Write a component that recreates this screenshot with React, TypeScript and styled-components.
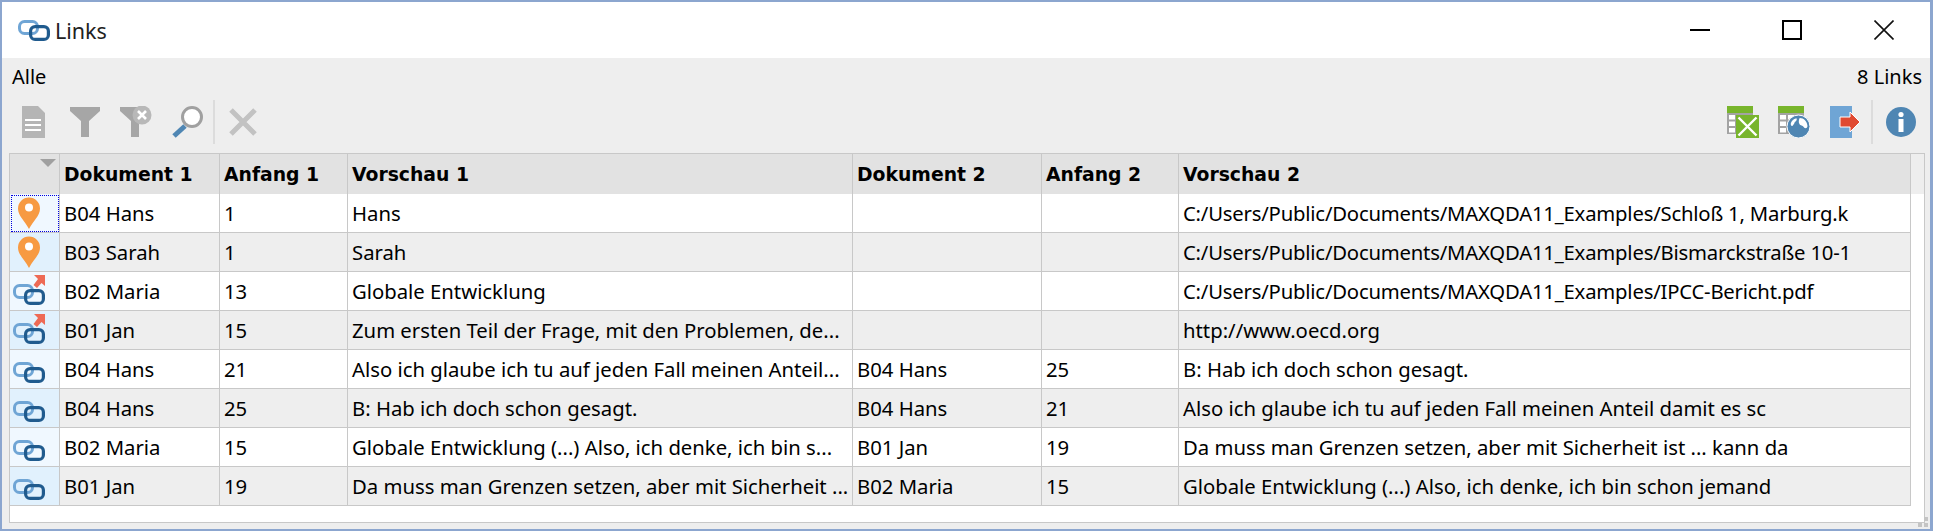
import React from 'react';
import styled, { createGlobalStyle } from 'styled-components';

const GlobalStyle = createGlobalStyle`
  html, body { margin: 0; padding: 0; background: #fff; }
  body { font-family: "Noto Sans", "Open Sans", sans-serif; color: #000; }
`;

const Win = styled.div`
  position: relative;
  box-sizing: border-box;
  width: 1933px;
  height: 531px;
  border: 2px solid #8ca6cf;
  border-right-width: 3px;
  background: #eeeeee;
  display: flex;
  flex-direction: column;
`;

const TitleBar = styled.div`
  height: 56px;
  background: #fff;
  display: flex;
  align-items: center;
  padding-left: 16px;
  flex: none;
`;

const TitleIcon = styled.div`
  display: flex;
  margin-bottom: 6px;
`;

const TitleText = styled.span`
  margin-left: 5px;
  font-size: 21.5px;
  color: #222;
  flex: 1;
`;

const WinButtons = styled.div`
  display: flex;
  height: 100%;
`;

const WinButton = styled.div`
  width: 92px;
  display: flex;
  align-items: center;
  justify-content: center;
`;

const InfoRow = styled.div`
  height: 37px;
  flex: none;
  display: flex;
  align-items: center;
  justify-content: space-between;
  padding: 0 8px 0 10px;
  font-size: 20px;
`;

const Toolbar = styled.div`
  height: 54px;
  flex: none;
  display: flex;
  align-items: center;
  padding: 0 4px 0 6px;
`;

const ToolGroup = styled.div`
  display: flex;
  align-items: center;
  height: 100%;
`;

const ToolButton = styled.div`
  width: 51px;
  height: 100%;
  display: flex;
  align-items: center;
  justify-content: center;
`;

const Separator = styled.div`
  width: 2px;
  height: 44px;
  margin: 0 2px 0 1px;
  background: #dcdcdc;
`;

const Spacer = styled.div`
  flex: 1;
`;

const TableFrame = styled.div`
  margin: 4px 5px 0 7px;
  height: 370px;
  box-sizing: border-box;
  border: 1px solid #c8c8c8;
  background: #fff;
  flex: none;
`;

const columns = '50px 160px 128px 505px 189px 137px 732px 1fr';

const HeaderRow = styled.div`
  display: grid;
  grid-template-columns: ${columns};
  height: 40px;
  background: #e2e2e2;
`;

const HeaderCell = styled.div<{ $filler?: boolean }>`
  position: relative;
  box-sizing: border-box;
  border-right: 1px solid #c8c8c8;
  padding-left: 4px;
  display: flex;
  align-items: center;
  font-family: "DejaVu Sans", sans-serif;
  font-weight: 700;
  font-size: 18.8px;
  white-space: nowrap;
  ${(p) => (p.$filler ? 'background: #eeeeee; border-right: none;' : '')}
`;

const SortArrow = styled.div`
  position: absolute;
  top: 5px;
  right: 3px;
  width: 0;
  height: 0;
  border-left: 8px solid transparent;
  border-right: 8px solid transparent;
  border-top: 8px solid #a0a0a0;
`;

const Row = styled.div<{ $alt: boolean }>`
  display: grid;
  grid-template-columns: ${columns};
  height: 39px;
  background: ${(p) => (p.$alt ? '#eeeeee' : '#fff')};
`;

const Cell = styled.div<{ $path?: boolean }>`
  box-sizing: border-box;
  border-right: 1px solid #c8c8c8;
  border-bottom: 1px solid #c8c8c8;
  padding-left: 4px;
  display: flex;
  align-items: center;
  font-size: 20.3px;
  white-space: nowrap;
  overflow: hidden;
  ${(p) => (p.$path ? 'letter-spacing: -0.2px;' : '')}
`;

const IconCell = styled.div<{ $alt: boolean; $focus?: boolean; $inset: number }>`
  box-sizing: border-box;
  border-right: 1px solid #c8c8c8;
  border-bottom: 1px solid #c8c8c8;
  background: ${(p) => (p.$alt ? '#e1f1fd' : '#f0f8ff')};
  display: flex;
  align-items: center;
  padding-left: ${(p) => p.$inset}px;
  ${(p) => (p.$focus ? 'outline: 1px dotted #0000e0; outline-offset: -2px;' : '')}
`;

const Filler = styled.div`
  background: #fff;
`;

const Grip = styled.svg`
  position: absolute;
  right: 2px;
  bottom: 2px;
`;

const LinkIcon = ({ out }: { out?: boolean }) => (
  <svg width="32" height="32" viewBox="0 0 32 32">
    <rect x="1.5" y="10.5" width="18" height="12" rx="5" fill="none" stroke="#6fa5d5" strokeWidth="3" />
    <rect x="12.6" y="15.6" width="17.8" height="12.8" rx="4.5" fill="none" stroke="#205b8e" strokeWidth="3.2" />
    {out && <path d="M21 0 H32 V11 L28.5 8 L24 13 L20.5 10 L25 4 Z" fill="#ee6a55" />}
  </svg>
);

const PinIcon = () => (
  <svg width="24" height="32" viewBox="0 0 24 32">
    <path d="M12 32 C8 24 1 19 1 11.5 A11 11 0 0 1 23 11.5 C23 19 16 24 12 32 Z" fill="#f79a42" />
    <circle cx="12" cy="10.5" r="4" fill="#fff" />
  </svg>
);

const TableGlyph = () => (
  <g>
    <rect x="0" y="0" width="26" height="28" fill="#a3a3a3" />
    <rect x="0" y="0" width="26" height="7" fill="#78b52c" />
    <rect x="2" y="9" width="6" height="4.5" fill="#fff" />
    <rect x="10" y="9" width="6" height="4.5" fill="#fff" />
    <rect x="18" y="9" width="6" height="4.5" fill="#fff" />
    <rect x="2" y="15.5" width="6" height="4.5" fill="#fff" />
    <rect x="10" y="15.5" width="6" height="4.5" fill="#fff" />
    <rect x="2" y="22" width="6" height="4.5" fill="#fff" />
  </g>
);

const DocIcon = () => (
  <svg width="32" height="32" viewBox="0 0 32 32">
    <path d="M4 0 H20 L27 7 V32 H4 Z" fill="#b5b5b5" />
    <path d="M7 14 H23 M7 19 H23 M7 24 H23" stroke="#fff" strokeWidth="2" />
  </svg>
);

const FunnelIcon = () => (
  <svg width="32" height="32" viewBox="0 0 32 32">
    <path d="M1 1 H31 V5 L20 15 V31 H12 V15 L1 5 Z" fill="#a6a6a6" />
  </svg>
);

const FunnelClearIcon = () => (
  <svg width="32" height="32" viewBox="0 0 32 32">
    <path d="M0 1 H26 L19 15 V31 H11 V15 L0 5 Z" fill="#a6a6a6" />
    <circle cx="22" cy="9" r="9.5" fill="#b8b8b8" />
    <path d="M18 5 L26 13 M26 5 L18 13" stroke="#fff" strokeWidth="2.6" />
  </svg>
);

const SearchIcon = () => (
  <svg width="32" height="32" viewBox="0 0 32 32">
    <path d="M3 30 L14 20" stroke="#4f86b3" strokeWidth="5" />
    <circle cx="21" cy="11" r="9.5" fill="#fff" stroke="#a0a0a0" strokeWidth="3" />
  </svg>
);

const CrossIcon = () => (
  <svg width="32" height="32" viewBox="0 0 32 32">
    <path d="M4 4 L28 28 M28 4 L4 28" stroke="#c2c2c2" strokeWidth="5" />
  </svg>
);

const ExcelIcon = () => (
  <svg width="32" height="32" viewBox="0 0 32 32">
    <TableGlyph />
    <rect x="9" y="9" width="23" height="23" fill="#78b52c" />
    <path d="M11.5 11.5 L29.5 29.5 M29.5 11.5 L11.5 29.5" stroke="#fff" strokeWidth="2.4" />
  </svg>
);

const GlobeIcon = () => (
  <svg width="32" height="32" viewBox="0 0 32 32">
    <TableGlyph />
    <circle cx="20.5" cy="20.5" r="11.5" fill="#4f86b3" stroke="#fff" strokeWidth="1" />
    <g transform="translate(20.5 20.5) scale(0.82) translate(-20.5 -20.5)">
      <path d="M11 17 C12 14 14 11.5 18 10.5 C19 12 18 14 16 15 C15.5 17 14 19 13 20 C12 20 11 19 11 17 Z" fill="#fff" />
      <path d="M22 10 C27 10 31 14 31.5 20 C31 23 29 23 27.5 22 C26 19 24 20 22 18 C20 15 21 12 22 10 Z" fill="#fff" />
    </g>
  </svg>
);

const ExportIcon = () => (
  <svg width="32" height="32" viewBox="0 0 32 32">
    <rect x="1" y="0" width="22" height="32" fill="#6fa5d5" />
    <path d="M11 11 H21 V6 L31 16 L21 26 V21 H11 Z" fill="#e04a32" stroke="#fff" strokeWidth="1" />
  </svg>
);

const InfoIcon = () => (
  <svg width="32" height="32" viewBox="0 0 32 32">
    <circle cx="16" cy="16" r="15" fill="#4f86b3" />
    <circle cx="16" cy="8.5" r="2.6" fill="#fff" />
    <rect x="13.5" y="13" width="5" height="13" fill="#fff" />
  </svg>
);

type Kind = 'pin' | 'out' | 'link';

interface LinkRow {
  kind: Kind;
  cells: string[];
}

const headers = ['Dokument 1', 'Anfang 1', 'Vorschau 1', 'Dokument 2', 'Anfang 2', 'Vorschau 2'];

const rows: LinkRow[] = [
  { kind: 'pin', cells: ['B04 Hans', '1', 'Hans', '', '', 'C:/Users/Public/Documents/MAXQDA11_Examples/Schloß 1, Marburg.k'] },
  { kind: 'pin', cells: ['B03 Sarah', '1', 'Sarah', '', '', 'C:/Users/Public/Documents/MAXQDA11_Examples/Bismarckstraße 10-1'] },
  { kind: 'out', cells: ['B02 Maria', '13', 'Globale Entwicklung', '', '', 'C:/Users/Public/Documents/MAXQDA11_Examples/IPCC-Bericht.pdf'] },
  { kind: 'out', cells: ['B01 Jan', '15', 'Zum ersten Teil der Frage, mit den Problemen, de...', '', '', 'http://www.oecd.org'] },
  { kind: 'link', cells: ['B04 Hans', '21', 'Also ich glaube ich tu auf jeden Fall meinen Anteil...', 'B04 Hans', '25', 'B: Hab ich doch schon gesagt.'] },
  { kind: 'link', cells: ['B04 Hans', '25', 'B: Hab ich doch schon gesagt.', 'B04 Hans', '21', 'Also ich glaube ich tu auf jeden Fall meinen Anteil damit es sc'] },
  { kind: 'link', cells: ['B02 Maria', '15', 'Globale Entwicklung (...) Also, ich denke, ich bin s...', 'B01 Jan', '19', 'Da muss man Grenzen setzen, aber mit Sicherheit ist ... kann da'] },
  { kind: 'link', cells: ['B01 Jan', '19', 'Da muss man Grenzen setzen, aber mit Sicherheit ...', 'B02 Maria', '15', 'Globale Entwicklung (...) Also, ich denke, ich bin schon jemand'] },
];

export default function App() {
  return (
    <>
      <GlobalStyle />
      <Win>
        <TitleBar>
          <TitleIcon><LinkIcon /></TitleIcon>
          <TitleText>Links</TitleText>
          <WinButtons>
            <WinButton>
              <svg width="20" height="20" viewBox="0 0 20 20"><path d="M0 10 H20" stroke="#000" strokeWidth="2" /></svg>
            </WinButton>
            <WinButton>
              <svg width="20" height="20" viewBox="0 0 20 20"><rect x="1" y="1" width="18" height="18" fill="none" stroke="#000" strokeWidth="2" /></svg>
            </WinButton>
            <WinButton>
              <svg width="20" height="20" viewBox="0 0 20 20"><path d="M0.5 0.5 L19.5 19.5 M19.5 0.5 L0.5 19.5" stroke="#111" strokeWidth="1.6" /></svg>
            </WinButton>
          </WinButtons>
        </TitleBar>
        <InfoRow>
          <span>Alle</span>
          <span>8 Links</span>
        </InfoRow>
        <Toolbar>
          <ToolGroup>
            <ToolButton><DocIcon /></ToolButton>
            <ToolButton><FunnelIcon /></ToolButton>
            <ToolButton><FunnelClearIcon /></ToolButton>
            <ToolButton><SearchIcon /></ToolButton>
            <Separator />
            <ToolButton><CrossIcon /></ToolButton>
          </ToolGroup>
          <Spacer />
          <ToolGroup>
            <ToolButton><ExcelIcon /></ToolButton>
            <ToolButton><GlobeIcon /></ToolButton>
            <ToolButton><ExportIcon /></ToolButton>
            <Separator />
            <ToolButton><InfoIcon /></ToolButton>
          </ToolGroup>
        </Toolbar>
        <TableFrame>
          <HeaderRow>
            <HeaderCell><SortArrow /></HeaderCell>
            {headers.map((h) => (
              <HeaderCell key={h}>{h}</HeaderCell>
            ))}
            <HeaderCell $filler />
          </HeaderRow>
          {rows.map((row, i) => {
            const alt = i % 2 === 1;
            return (
              <Row key={i} $alt={alt}>
                <IconCell $alt={alt} $focus={i === 0} $inset={row.kind === 'pin' ? 7 : 3}>
                  {row.kind === 'pin' ? <PinIcon /> : <LinkIcon out={row.kind === 'out'} />}
                </IconCell>
                {row.cells.map((c, j) => (
                  <Cell key={j} $path={c.startsWith('C:/')}>{c}</Cell>
                ))}
                <Filler />
              </Row>
            );
          })}
        </TableFrame>
        <Grip width="10" height="10" viewBox="0 0 10 10">
          <path d="M6 0 H10 V4 H6 Z M0 6 H4 V10 H0 Z M6 6 H10 V10 H6 Z" fill="#c4c4c4" />
        </Grip>
      </Win>
    </>
  );
}
